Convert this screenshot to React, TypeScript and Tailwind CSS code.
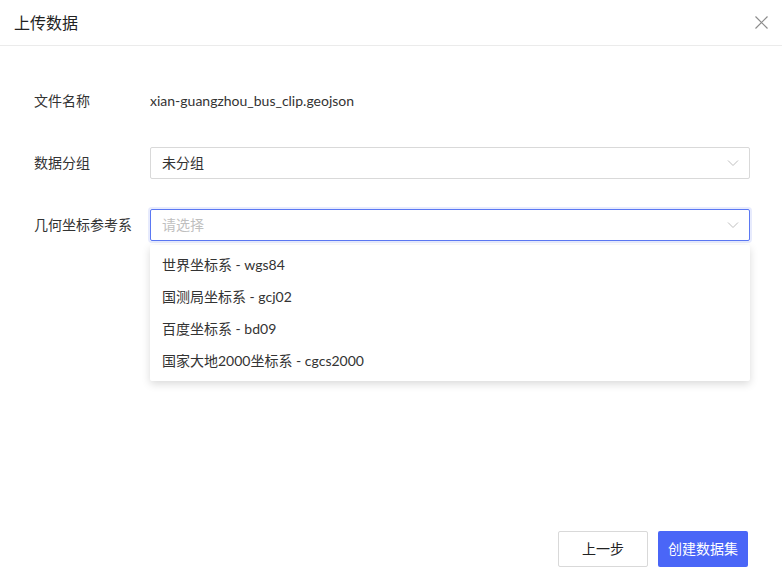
import React from "react";

const options = [
  "世界坐标系 - wgs84",
  "国测局坐标系 - gcj02",
  "百度坐标系 - bd09",
  "国家大地2000坐标系 - cgcs2000",
];

const Chevron = () => (
  <svg width="12" height="12" viewBox="0 0 12 12" fill="none" className="text-[#bfbfbf]">
    <path d="M1 3.5 L6 8.5 L11 3.5" stroke="currentColor" strokeWidth="1" />
  </svg>
);

const App: React.FC = () => {
  return (
    <div
      className="w-[782px] h-[579px] bg-white flex flex-col text-[#333] text-sm"
      style={{ fontFamily: 'Lato, "Noto Sans CJK SC", sans-serif' }}
    >
      {/* header */}
      <div className="h-[46px] flex items-center justify-between pl-[14px] pr-[14px] border-b border-[#ebebeb] shrink-0">
        <span className="text-base text-[#222]">上传数据</span>
        <svg width="13" height="13" viewBox="0 0 13 13" className="text-[#8c8c8c]">
          <path d="M0.5 0.5 L12.5 12.5 M12.5 0.5 L0.5 12.5" stroke="currentColor" strokeWidth="1.2" />
        </svg>
      </div>

      {/* body */}
      <div className="flex-1 flex flex-col pl-[34px] pr-[32px] pt-[39px]">
        <div className="flex items-center h-[32px]">
          <span className="w-[116px]">文件名称</span>
          <span>xian-guangzhou_bus_clip.geojson</span>
        </div>

        <div className="flex items-center h-[32px] mt-[30px]">
          <span className="w-[116px]">数据分组</span>
          <div className="flex-1 h-[32px] border border-[#d9d9d9] rounded-[2px] flex items-center justify-between pl-[11px] pr-[10px]">
            <span>未分组</span>
            <Chevron />
          </div>
        </div>

        <div className="flex items-center h-[32px] mt-[30px]">
          <span className="w-[116px]">几何坐标参考系</span>
          <div className="flex-1 relative">
            <div className="h-[32px] border border-[#5b78f3] rounded-[2px] flex items-center justify-between pl-[11px] pr-[10px] shadow-[0_0_0_2px_rgba(91,120,243,0.15)]">
              <span className="text-[#bfbfbf]">请选择</span>
              <Chevron />
            </div>
            <div className="absolute left-0 right-0 top-[36px] bg-white rounded-[2px] py-[4px] shadow-[0_3px_8px_rgba(0,0,0,0.15)] z-10">
              {options.map((o) => (
                <div key={o} className="h-[32px] flex items-center pl-[12px]">
                  {o}
                </div>
              ))}
            </div>
          </div>
        </div>
      </div>

      {/* footer */}
      <div className="flex justify-end gap-[10px] pr-[34px] pb-[12px] shrink-0">
        <button className="w-[90px] h-[36px] border border-[#d9d9d9] rounded-[2px] bg-white text-[#222]">
          上一步
        </button>
        <button className="w-[90px] h-[36px] rounded-[2px] bg-[#4a66f7] text-white">
          创建数据集
        </button>
      </div>
    </div>
  );
};

export default App;
